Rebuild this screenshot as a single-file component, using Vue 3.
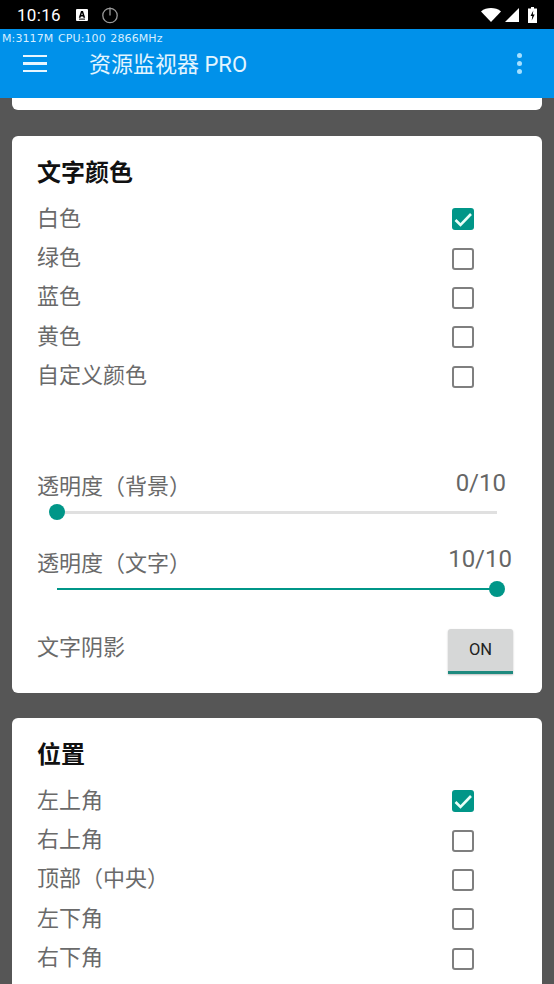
<script setup>
const colors = [
  { label: '白色', on: true },
  { label: '绿色', on: false },
  { label: '蓝色', on: false },
  { label: '黄色', on: false },
  { label: '自定义颜色', on: false }
]
const places = [
  { label: '左上角', on: true },
  { label: '右上角', on: false },
  { label: '顶部（中央）', on: false },
  { label: '左下角', on: false },
  { label: '右下角', on: false }
]
</script>

<template>
  <div class="screen">
    <div class="status">
      <span class="time">10:16</span>
      <svg class="ic-a" viewBox="0 0 14 14"><rect x="1" y="1" width="12" height="12" rx="1" fill="#fff"/><path d="M3.800 9.800 6 3h2l2.200 6.800H8.500L8.100 8.400H5.900l-.4 1.400zM6.300 7h1.400L7 4.800z" fill="#000"/><rect x="4" y="10.600" width="6" height="1" fill="#000"/></svg>
      <svg class="ic-power" viewBox="0 0 18 18"><circle cx="9" cy="9.500" r="7.200" fill="none" stroke="#9a9a9a" stroke-width="1.300"/><path d="M9 1.500v8" stroke="#9a9a9a" stroke-width="1.300"/></svg>
      <span class="grow"></span>
      <svg class="ic-wifi" viewBox="0 0 20 14"><path d="M0 3.400C5.600-1 14.400-1 20 3.400L10 14z" fill="#fff"/></svg>
      <svg class="ic-signal" viewBox="0 0 14 14"><path d="M14 0v14H0z" fill="#fff"/></svg>
      <svg class="ic-batt" viewBox="0 0 9 16"><path d="M3 0h3v1.500h3V16H0V1.500h3z" fill="#fff"/><path d="M5.300 3.500 2.500 9h1.800l-.6 4.500L6.700 7.500H4.800z" fill="#000"/></svg>
    </div>

    <header class="bar">
      <div class="overlay">M:3117M CPU:100 2866MHz</div>
      <div class="menu"><i></i><i></i><i></i></div>
      <h1 class="title">资源监视器 PRO</h1>
      <span class="grow"></span>
      <div class="more"><i></i><i></i><i></i></div>
    </header>

    <main class="content">
      <div class="card stub"></div>

      <section class="card text-card">
        <h2>文字颜色</h2>
        <div class="list">
          <div v-for="c in colors" :key="c.label" class="row">
            <span class="label">{{ c.label }}</span>
            <span class="box" :class="{ on: c.on }">
              <svg v-if="c.on" viewBox="0 0 22 22"><path d="M3.500 12l5 5L19 6" fill="none" stroke="#e8fff8" stroke-width="2.600"/></svg>
            </span>
          </div>
        </div>

        <div class="slider first">
          <div class="slider-head"><span>透明度（背景）</span><span class="value">0/10</span></div>
          <div class="track"><b class="thumb start"></b></div>
        </div>
        <div class="slider second">
          <div class="slider-head"><span>透明度（文字）</span><span class="value v2">10/10</span></div>
          <div class="track full"><b class="thumb end"></b></div>
        </div>

        <div class="shadow-row">
          <span>文字阴影</span>
          <button class="toggle">ON</button>
        </div>
      </section>

      <section class="card pos-card">
        <h2>位置</h2>
        <div class="list">
          <div v-for="p in places" :key="p.label" class="row">
            <span class="label">{{ p.label }}</span>
            <span class="box" :class="{ on: p.on }">
              <svg v-if="p.on" viewBox="0 0 22 22"><path d="M3.500 12l5 5L19 6" fill="none" stroke="#e8fff8" stroke-width="2.600"/></svg>
            </span>
          </div>
        </div>
      </section>
    </main>
  </div>
</template>

<style scoped>
.screen {
  width: 554px;
  height: 984px;
  overflow: hidden;
  background: #565656;
  display: flex;
  flex-direction: column;
  font-family: Roboto, "Noto Sans CJK SC", sans-serif;
}
.grow { flex: 1; }
.status {
  height: 29px;
  flex: none;
  background: #000;
  display: flex;
  align-items: center;
  padding: 0 17px 0 17px;
  color: #fff;
}
.time { font-size: 17px; font-weight: 400; letter-spacing: .3px; }
.ic-a { width: 14px; height: 14px; margin-left: 14px; }
.ic-power { width: 18px; height: 18px; margin-left: 12px; }
.ic-wifi { width: 20px; height: 14px; }
.ic-signal { width: 14px; height: 14px; margin-left: 4px; }
.ic-batt { width: 9px; height: 16px; margin-left: 9px; }
.bar {
  position: relative;
  height: 69px;
  flex: none;
  background: #0091ea;
  display: flex;
  align-items: center;
  padding: 0 32px 0 23px;
  color: #e3f5ff;
  box-sizing: border-box;
  z-index: 1;
}
.overlay {
  position: absolute;
  left: 2px;
  top: 3px;
  font: 11px/14px "DejaVu Sans", sans-serif;
  color: #d5eeff;
  white-space: nowrap;
  letter-spacing: .1px;
  word-spacing: 1px;
}
.menu { display: flex; flex-direction: column; gap: 5px; width: 24px; }
.menu i { display: block; height: 2.500px; background: #e8f6ff; }
.title { margin: 2px 0 0 42px; font-size: 22px; font-weight: 400; line-height: 30px; }
.more { display: flex; flex-direction: column; gap: 3px; }
.more i { width: 5px; height: 5px; border-radius: 50%; background: #a5e0ff; }
.content { flex: 1; padding: 0 12px; overflow: hidden; }
.card { background: #fff; width: 530px; box-sizing: border-box; border-radius: 6px; }
.stub { height: 12px; border-radius: 0 0 6px 6px; margin-bottom: 26px; }
.text-card { height: 557px; padding: 21.500px 26px 0 25px; margin-bottom: 25px; }
.pos-card { height: 320px; padding: 21.500px 26px 0 25px; }
h2 { margin: 0; font-size: 24px; line-height: 30px; font-weight: 700; color: #111; }
.list { margin-top: 10px; }
.row {
  height: 39.400px;
  display: flex;
  align-items: center;
  justify-content: space-between;
  padding-right: 42px;
  font-size: 22px;
  color: #6a6a6a;
}
.label { margin-bottom: 3px; }
.box {
  width: 22px;
  height: 22px;
  margin-top: 4px;
  box-sizing: border-box;
  border: 2px solid #7f7f7f;
  border-radius: 3px;
  display: block;
}
.box.on { background: #009688; border: 0; }
.box svg { width: 22px; height: 22px; display: block; }
.slider { width: 469px; }
.first { margin-top: 75.500px; }
.second { margin-top: 33px; }
.slider-head {
  height: 28px;
  display: flex;
  justify-content: space-between;
  align-items: center;
  font-size: 22px;
  color: #6a6a6a;
}
.value { font-size: 24px; color: #666; position: relative; top: -1px; }
.v2 { top: -2px; left: 6px; }
.track { height: 3px; margin: 13px 9px 0 20px; background: #e0e0e0; position: relative; }
.track.full { height: 2px; background: #009688; }
.thumb {
  position: absolute;
  top: -6.500px;
  width: 16px;
  height: 16px;
  border-radius: 50%;
  background: #009688;
}
.full .thumb { top: -7px; }
.start { left: -8px; }
.end { right: -8px; }
.shadow-row {
  margin-top: 39px;
  height: 62px;
  display: flex;
  justify-content: space-between;
  align-items: flex-start;
  font-size: 22px;
  color: #6a6a6a;
  padding-right: 3px;
}
.toggle {
  width: 65px;
  height: 45px;
  padding: 0;
  border: 0;
  border-bottom: 3px solid #1f8a7f;
  border-radius: 3px 3px 0 0;
  background: #d6d7d7;
  color: #222;
  font: 400 16.500px Roboto, sans-serif;
  box-shadow: 0 1px 2px rgba(0,0,0,.25);
}
</style>
